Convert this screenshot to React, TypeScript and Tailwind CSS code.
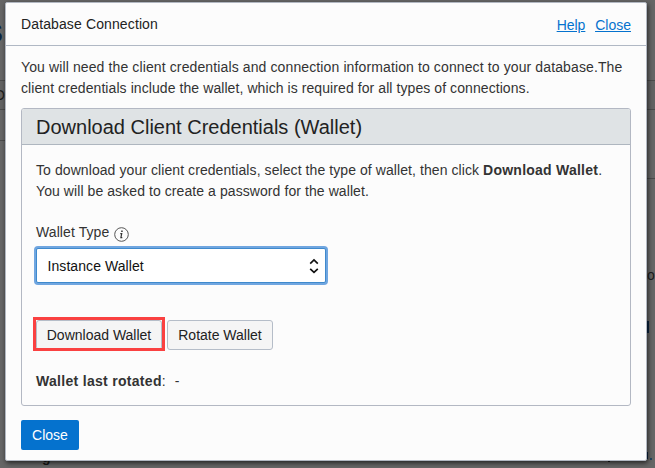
import React from "react";

function Backdrop() {
  return (
    <div className="absolute inset-0 flex flex-col overflow-hidden bg-[#666666] leading-[18px] text-[#1c1c1c]">
      <div className="flex h-[80px] pt-[18px]">
        <span className="-ml-[14px] text-[25px] leading-[30px] font-bold text-[#0c2440]">S</span>
      </div>
      <div className="flex h-[30px] items-center border-y border-[#4b4b4b] bg-[#626262]">
        <span className="-ml-[6px]">O</span>
      </div>
      <div className="mt-[30px] h-px w-[6px] bg-[#4b4b4b]" />
      <div className="mt-[37px] h-px w-[8px] self-end bg-[#4b4b4b]" />
      <div className="mt-[87px] flex h-[18px] justify-end">
        <span className="w-[8px]">o</span>
      </div>
      <div className="mt-[37px] h-[12px] w-[9px] self-end border-l-[3px] border-[#0c2440]" />
      <div className="mt-[115px] flex h-[20px] justify-between">
        <b className="pl-[42px] leading-[18px] text-[#161616]">g</b>
        <div className="flex items-start">
          <div className="mr-[36px] mt-[13px] h-px w-[2px] bg-[#161616]" />
          <div className="mt-[4px] h-[7px] w-[2px] bg-[#0c2440]" />
          <div className="ml-[2px] mr-[3px] mt-[10px] h-[2px] w-[2px] bg-[#21455f]" />
        </div>
      </div>
    </div>
  );
}

function InfoIcon() {
  return (
    <svg width="15" height="15" viewBox="0 0 15 15" fill="none" className="mt-[4px]">
      <circle cx="7.5" cy="7.5" r="6.8" stroke="#555" strokeWidth="1" />
      <path d="M7.2 4.2h1.5" stroke="#333" strokeWidth="1.5" />
      <path d="M6.3 6.7h1.4l-.8 4h1.4" stroke="#333" strokeWidth="1.2" />
    </svg>
  );
}

export default function App() {
  return (
    <div className="relative h-[468px] w-[655px] overflow-hidden pl-[5px] pt-[2px] font-['Liberation_Sans',Arial,sans-serif] text-[14px] leading-[21px] text-[#333333]">
      <Backdrop />
      <div className="relative h-[459px] w-[642px] rounded-[2px] border border-[#b2b8c2] bg-[#fcfcfc] shadow-[1px_2px_5px_rgba(0,0,0,0.65)]">
        <header className="flex h-[43px] items-center justify-between border-b border-[#b0b8c4] px-[15px]">
          <h1 className="tracking-[0.12px] text-[#222222]">Database Connection</h1>
          <nav className="flex gap-[10px] pt-[2px] text-[#0572ce] underline">
            <a className="tracking-[-0.1px]">Help</a>
            <a>Close</a>
          </nav>
        </header>
        <div className="px-[15px] pt-[11px]">
          <p className="whitespace-nowrap">
            <span className="tracking-[0.118px]">
              You will need the client credentials and connection information to connect to your database.The
            </span>
            <br />
            <span className="tracking-[0.078px]">
              client credentials include the wallet, which is required for all types of connections.
            </span>
          </p>
          <section className="mt-[9px] h-[298px] rounded-[3px] border border-[#b3b8c3]">
            <h2 className="h-[36px] rounded-t-[2px] border-b border-[#aeb6bf] bg-[#dfe3e5] pl-[14px] text-[20px] leading-[36px] text-[#222222]">
              Download Client Credentials (Wallet)
            </h2>
            <div className="px-[14px] pt-[15px]">
              <p className="whitespace-nowrap tracking-[0.078px]">
                To download your client credentials, select the type of wallet, then click{" "}
                <b className="tracking-[0.24px]">Download Wallet</b>.
                <br />
                You will be asked to create a password for the wallet.
              </p>
              <label className="mt-[20px] flex items-center gap-[5px] tracking-[0.09px]">
                Wallet Type
                <InfoIcon />
              </label>
              <div className="mt-[5px] flex h-[35px] w-[290px] items-center justify-between rounded-[2px] border border-[#3f8acd] bg-white pl-[10.5px] pr-[6px] pt-px tracking-[0.07px] text-[#111111] ring-2 ring-[#70a6e0]">
                Instance Wallet
                <svg width="10" height="16" viewBox="0 0 10 16" fill="none" stroke="#111" strokeWidth="1.7">
                  <path d="M1.2 5.6 5 2l3.8 3.6M1.2 10.8 5 14.4l3.8-3.6" />
                </svg>
              </div>
              <div className="mt-[37px] flex gap-[5px] text-[#222222]">
                <div className="relative">
                  <button className="block h-[30px] w-[126px] rounded-[3px] border border-[#b5bdc8] bg-[#f5f5f5]">
                    Download Wallet
                  </button>
                  <div className="absolute -inset-x-[3px] -bottom-px -top-[3px] border-[3px] border-[#fa4141]" />
                </div>
                <button className="h-[30px] w-[106px] rounded-[3px] border border-[#b5bdc8] bg-[#f5f5f5]">Rotate Wallet</button>
              </div>
              <p className="mt-[21px]">
                <b className="tracking-[0.3px]">Wallet last rotated</b>:<span className="ml-[9px]">-</span>
              </p>
            </div>
          </section>
          <button className="mt-[14px] h-[30px] w-[58px] rounded-[2px] bg-[#0572ce] text-white">Close</button>
        </div>
      </div>
    </div>
  );
}
